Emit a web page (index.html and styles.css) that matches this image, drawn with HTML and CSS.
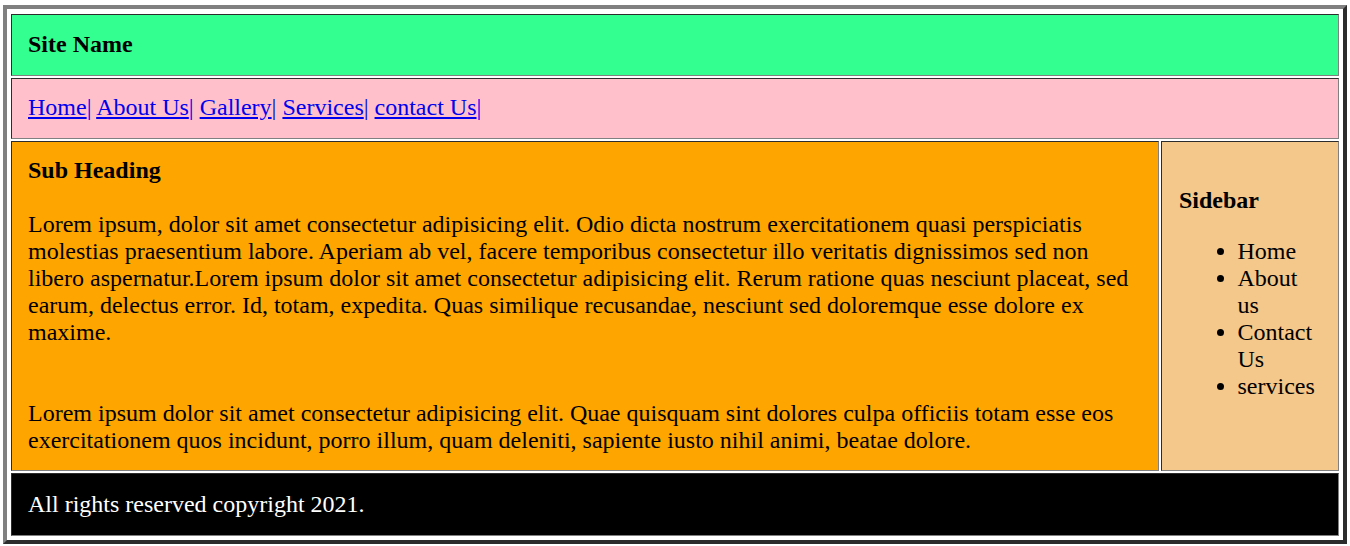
FILE: index.html
```html
<!DOCTYPE html>
<html>
<head>
<meta charset="utf-8">
<link rel="stylesheet" href="styles.css">
</head>
<body>
<table class="layout">
  <tr>
    <td colspan="2" class="header"><h3 class="site-name">Site Name</h3></td>
  </tr>
  <tr>
    <td colspan="2" class="nav"><a href="#">Home</a><span class="sep">|</span> <a href="#">About Us</a><span class="sep">|</span> <a href="#">Gallery</a><span class="sep">|</span> <a href="#">Services</a><span class="sep">|</span> <a href="#">contact Us</a><span class="sep">|</span></td>
  </tr>
  <tr>
    <td class="main">
      <h4 class="sub-heading">Sub Heading</h4>
      <p class="para first">Lorem ipsum, dolor sit amet consectetur adipisicing elit. Odio dicta nostrum exercitationem quasi perspiciatis molestias praesentium labore. Aperiam ab vel, facere temporibus consectetur illo veritatis dignissimos sed non libero aspernatur.Lorem ipsum dolor sit amet consectetur adipisicing elit. Rerum ratione quas nesciunt placeat, sed earum, delectus error. Id, totam, expedita. Quas similique recusandae, nesciunt sed doloremque esse dolore ex maxime.</p>
      <p class="para">Lorem ipsum dolor sit amet consectetur adipisicing elit. Quae quisquam sint dolores culpa officiis totam esse eos exercitationem quos incidunt, porro illum, quam deleniti, sapiente iusto nihil animi, beatae dolore.</p>
    </td>
    <td class="sidebar">
      <h4 class="sidebar-title">Sidebar</h4>
      <ul class="side-list">
        <li>Home</li>
        <li>About us</li>
        <li>Contact Us</li>
        <li>services</li>
      </ul>
    </td>
  </tr>
  <tr>
    <td colspan="2" class="footer">All rights reserved copyright 2021.</td>
  </tr>
</table>
</body>
</html>
```

FILE: styles.css
```css
html, body {
  background: #ffffff;
}
body {
  margin: 5px 0 0 3px;
  font-family: "Liberation Serif", "Times New Roman", serif;
  font-size: 24px;
  line-height: 27px;
  color: #000;
}
.layout {
  width: 1344px;
  border: 4px outset #808080;
  border-spacing: 2px;
  padding: 3px 2px 2px 2px;
}
.layout td {
  border: 1px inset #808080;
  padding: 16px 16px;
}
.header {
  background: #33ff91;
}
.layout td.header {
  padding: 16px 16px 17px 16px;
}
.site-name {
  margin: 0;
  font-size: 24px;
  font-weight: bold;
  line-height: 27px;
}
.nav {
  background: #ffc0cb;
  height: 26px;
}
.layout td.nav {
  padding: 15px 16px 17px 16px;
}
.nav a {
  color: #0000ee;
  text-decoration: underline;
}
.sep {
  color: #0000ee;
  font-weight: 300;
}
.layout td.main {
  background: #ffa500;
  vertical-align: top;
  padding: 15px 16px 16px 16px;
}
.sub-heading {
  margin: 0 0 27px 0;
  font-size: 24px;
  font-weight: bold;
}
.para {
  margin: 0;
}
.para.first {
  margin-bottom: 54px;
}
.layout td.sidebar {
  background: #f4c78a;
  width: 143px;
  vertical-align: top;
  padding: 45px 16px 0 17px;
}
.sidebar-title {
  margin: 0 0 24px 0;
  font-size: 24px;
  font-weight: bold;
}
.side-list {
  margin: 0;
  padding-left: 58.5px;
}
.footer {
  background: #000000;
  color: #ffffff;
}
.layout td.footer {
  padding: 17px 16px 17px 16px;
}
```
